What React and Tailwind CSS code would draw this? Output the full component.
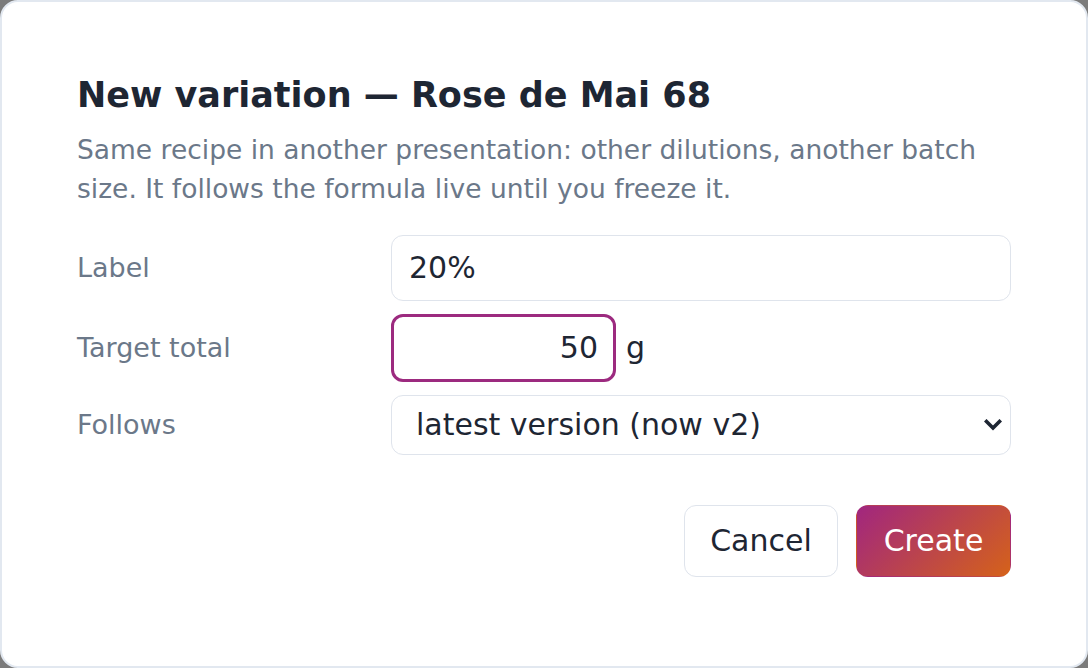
import { useState } from "react";

function App() {
  const [label, setLabel] = useState("20%");
  const [total, setTotal] = useState("50");

  return (
    <div className="h-[668px] w-full bg-[#7b7b7b] font-['DejaVu_Sans',sans-serif]">
      {/* Dialogue */}
      <div className="h-full w-full rounded-[18px] border-2 border-[#e2e8f0] bg-white px-[75px] pt-[72px]">
        <h2 className="text-[35px] font-bold leading-[1.25] text-[#1e2633]">
          New variation — Rose de Mai 68
        </h2>
        <p className="mt-[12px] text-[26.5px] leading-[39px] text-[#6b7889]">
          Same recipe in another presentation: other dilutions, another batch
          size. It follows the formula live until you freeze it.
        </p>

        {/* Formulaire */}
        <div className="mt-[27px] grid grid-cols-[314px_1fr] items-center gap-y-[13px] text-[27px]">
          <label className="text-[#6b7889]">Label</label>
          <input
            value={label}
            onChange={(e) => setLabel(e.target.value)}
            className="h-[66px] w-full rounded-[12px] border-[1.5px] border-[#dfe4ec] px-[17px] text-[30px] text-[#1e2633] outline-none"
          />

          <label className="text-[#6b7889]">Target total</label>
          <div className="flex items-center gap-[10px]">
            <input
              value={total}
              onChange={(e) => setTotal(e.target.value)}
              className="h-[68px] w-[225px] rounded-[12px] border-[3px] border-[#9c2a7f] px-[15px] text-right text-[30px] text-[#1e2633] outline-none"
            />
            <span className="text-[30px] text-[#1e2633]">g</span>
          </div>

          <label className="text-[#6b7889]">Follows</label>
          <div className="relative">
            <select className="h-[60px] w-full appearance-none rounded-[12px] border-[1.5px] border-[#dfe4ec] bg-white pl-[24px] pr-[40px] text-[30px] text-[#1e2633] outline-none">
              <option>latest version (now v2)</option>
              <option>v1</option>
            </select>
            {/* flèche */}
            <svg
              className="pointer-events-none absolute right-[9px] top-[24px] h-[12px] w-[18px]"
              viewBox="0 0 18 12"
              fill="none"
            >
              <path
                d="M2.5 2.5 L9 9 L15.5 2.5"
                stroke="#1e2633"
                strokeWidth="3.6"
                strokeLinecap="square"
              />
            </svg>
          </div>
        </div>

        {/* Boutons */}
        <div className="mt-[50px] flex justify-end gap-[18px]">
          <button className="h-[72px] w-[154px] rounded-[12px] border-[1.5px] border-[#dfe4ec] bg-white text-[30px] text-[#1e2633]">
            Cancel
          </button>
          <button className="h-[72px] w-[155px] rounded-[12px] border-[1.5px] border-transparent bg-[linear-gradient(135deg,#a1267f,#d5621a)] text-[30px] text-white">
            Create
          </button>
        </div>
      </div>
    </div>
  );
}

export default App;
